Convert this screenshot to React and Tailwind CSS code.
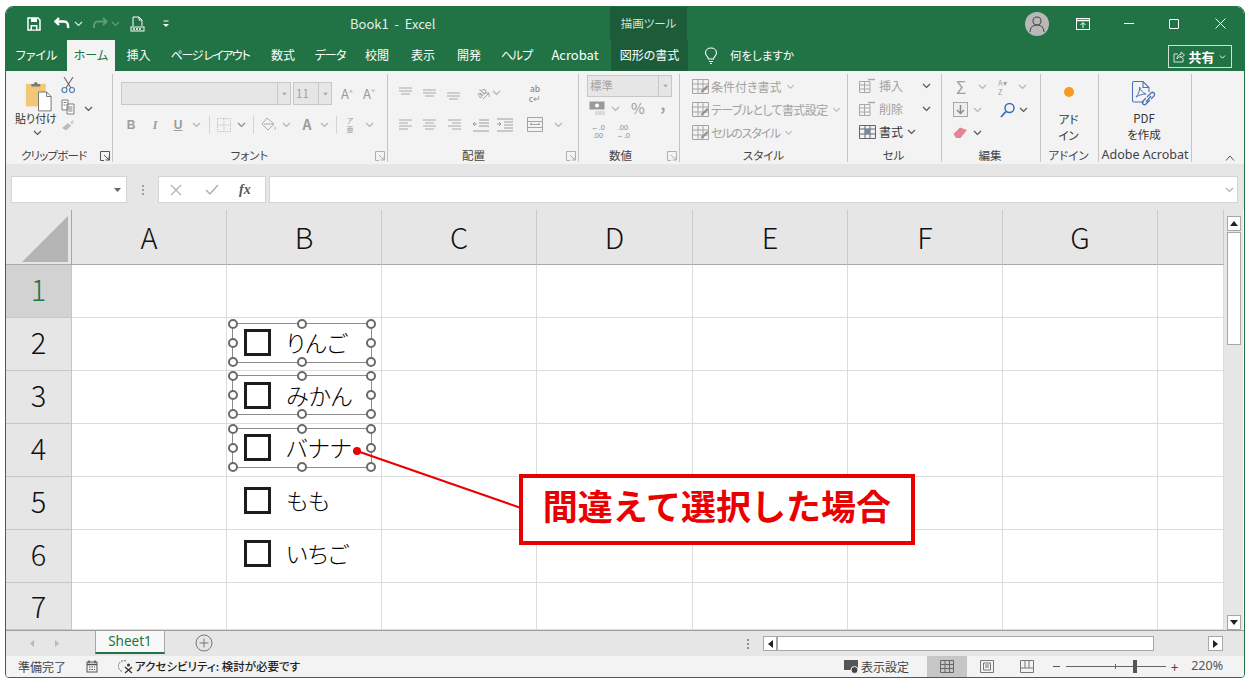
import React from 'react';
import clsx from 'clsx';

const Chev = ({ className, color = '#555' }) => (
  <svg width="9" height="6" viewBox="0 0 9 6" className={clsx('shrink-0', className)}>
    <polyline points="1,1 4.5,4.5 8,1" fill="none" stroke={color} strokeWidth="1.2" />
  </svg>
);

const Caret = ({ className, color = '#555' }) => (
  <svg width="7" height="4" viewBox="0 0 7 4" className={clsx('shrink-0', className)}>
    <polygon points="0,0 7,0 3.5,4" fill={color} />
  </svg>
);

const Launcher = ({ color = '#777' }) => (
  <svg width="10" height="10" viewBox="0 0 10 10" className="absolute right-[2px] bottom-[1px]">
    <path d="M0.5 0.5H9.5V9.5M0.5 0.5V9.5H4M4 4L9 9M9 5.5V9H5.5" fill="none" stroke={color} strokeWidth="1" />
  </svg>
);

const Lines = ({ rows, color = '#a8a8a8' }) => (
  <svg width="16" height="14" viewBox="0 0 16 14">
    {rows.map(([x1, x2, y], i) => (
      <line key={i} x1={x1} x2={x2} y1={y} y2={y} stroke={color} strokeWidth="1" />
    ))}
  </svg>
);

const Group = ({ label, className, launcher, labelClass, children }) => (
  <div className={clsx('relative mt-[3px] mb-[2px] flex shrink-0 flex-col border-r border-[#c4c4c4]', className)}>
    <div className="h-[74px]">{children}</div>
    <div className={clsx('h-[14px] text-center text-[11.5px] leading-[14px] text-[#444]', labelClass)}>{label}</div>
    {launcher && <Launcher color={launcher} />}
  </div>
);

const tabs = [
  ['ファイル', 'w-[61px]'],
  ['ホーム', 'w-[48px] bg-[#f3f3f3] text-[#217346]'],
  ['挿入', 'w-[47px]'],
  ['ページ レイアウト', 'w-[96px] tracking-[-1.3px]'],
  ['数式', 'w-[50px]'],
  ['データ', 'w-[44px] tracking-[-1px]'],
  ['校閲', 'w-[50px]'],
  ['表示', 'w-[42px]'],
  ['開発', 'w-[50px]'],
  ['ヘルプ', 'w-[45px] tracking-[-1px]'],
  ['Acrobat', 'w-[72px] text-[13px]'],
  ['図形の書式', 'w-[77px] bg-[#1d5c39]'],
];

const TitleBar = () => (
  <div className="flex h-[33px] shrink-0 items-center bg-[#217346] text-white">
    <svg width="14" height="14" viewBox="0 0 14 14" className="ml-[21px]">
      <path d="M1 1H11L13 3V13H1Z" fill="none" stroke="#fff" strokeWidth="1.5" />
      <rect x="4" y="1" width="6" height="4" fill="#fff" />
      <rect x="3.5" y="8" width="7" height="5" fill="#fff" />
      <rect x="5" y="9.5" width="4" height="3" fill="#217346" />
    </svg>
    <svg width="16" height="13" viewBox="0 0 16 13" className="ml-[13px]">
      <path d="M5 1L1.5 4.5L5 8M2 4.5H10C13 4.5 14.500 6.500 14 11" fill="none" stroke="#fff" strokeWidth="2.400" />
    </svg>
    <Chev color="#d7e6dd" className="ml-[4px]" />
    <svg width="16" height="13" viewBox="0 0 16 13" className="ml-[9px]">
      <path d="M11 1L14.500 4.500L11 8M14 4.500H6C3 4.500 1.500 6.500 2 11" fill="none" stroke="#5f9a79" strokeWidth="2" />
    </svg>
    <Chev color="#5f9a79" className="ml-[3px]" />
    <svg width="15" height="16" viewBox="0 0 15 16" className="ml-[10px]">
      <path d="M3 10V1H9L12 4V10M9 1V4H12" fill="none" stroke="#fff" strokeWidth="1" />
      <rect x="1" y="11" width="13" height="4" fill="none" stroke="#fff" strokeWidth="1" />
      <path d="M3 13H12" stroke="#fff" strokeWidth="1.500" strokeDasharray="2 1" />
    </svg>
    <svg width="6" height="8" viewBox="0 0 6 8" className="ml-[18px]">
      <path d="M0.500 1H5.500" stroke="#fff" />
      <polygon points="0,4 6,4 3,7" fill="#fff" />
    </svg>
    <div className="ml-[181px] w-[90px] text-[13px] whitespace-pre text-[#e4efe8]">Book1  -  Excel</div>
    <div className="ml-[170px] flex h-[33px] w-[77px] items-center justify-center bg-[#1d5c39] text-[11.5px] text-[#d5e5db]">描画ツール</div>
    <div className="ml-[338px] flex h-[24px] w-[24px] items-center justify-center rounded-full bg-[#b8b8b8]">
      <svg width="18" height="18" viewBox="0 0 18 18">
        <circle cx="9" cy="6" r="4" fill="none" stroke="#4a4a4a" strokeWidth="1.100" />
        <path d="M2 17C2 12.500 5 10 9 10C13 10 16 12.500 16 17" fill="none" stroke="#4a4a4a" strokeWidth="1.100" />
      </svg>
    </div>
    <svg width="14" height="12" viewBox="0 0 14 12" className="ml-[27px]">
      <rect x="0.500" y="0.500" width="13" height="11" fill="none" stroke="#fff" />
      <path d="M0.500 2.500H13.500" stroke="#fff" strokeWidth="1.500" />
      <path d="M7 10V5M4.500 7L7 4.500L9.500 7" fill="none" stroke="#fff" />
    </svg>
    <div className="ml-[34px] h-px w-[10px] bg-white" />
    <div className="ml-[35px] h-[10px] w-[10px] rounded-[1px] border border-white" />
    <svg width="11" height="11" viewBox="0 0 11 11" className="ml-[36px]">
      <path d="M0.500 0.500L10.500 10.500M10.500 0.500L0.500 10.500" stroke="#fff" />
    </svg>
  </div>
);

const TabRow = () => (
  <div className="flex h-[31px] shrink-0 items-stretch bg-[#217346] text-[12px] text-white">
    {tabs.map(([name, cls]) => (
      <div key={name} className={clsx('flex items-center justify-center pb-[1px] whitespace-pre', cls)}>{name}</div>
    ))}
    <div className="ml-[16px] flex items-center">
      <svg width="14" height="18" viewBox="0 0 14 18">
        <path d="M4.500 12C4 9.500 1.500 8.500 1.500 5.800C1.500 3 4 1 7 1C10 1 12.500 3 12.500 5.800C12.500 8.500 10 9.500 9.500 12Z M5 14.500H9M6 16.500H8" fill="none" stroke="#fff" strokeWidth="1.100" />
      </svg>
      <span className="ml-[12px] text-[11.5px]">何をしますか</span>
    </div>
    <div className="ml-auto mr-[12px] mt-[5px] flex h-[23px] w-[64px] items-center justify-center border border-[#cfe0d6] text-[13px] font-bold">
      <svg width="12" height="12" viewBox="0 0 12 12" className="mr-[3px]">
        <path d="M5 3H1V11H10V7M4 8C4 5 6 3.500 8 3.500V1L11.500 4L8 7V5.500C6.500 5.500 5 6.500 4 8Z" fill="none" stroke="#fff" strokeWidth="0.800" />
      </svg>
      共有
      <Chev color="#fff" className="ml-[3px] scale-75" />
    </div>
  </div>
);

const ClipboardGroup = () => (
  <Group label="クリップボード" launcher="#555" className="w-[107px] pl-[9px]" labelClass="whitespace-nowrap pl-[6px] text-left tracking-[-0.8px]">
    <div className="flex">
      <div className="w-[42px]">
        <svg width="27" height="33" viewBox="0 0 30 36" className="ml-[10px] mt-[6px]">
          <rect x="1" y="4" width="22" height="25" fill="#f2c877" />
          <path d="M7 4H10C10 1 14 1 14 4H17V7H7Z" fill="#7a7a7a" />
          <path d="M15 13H24L29 18V34H15Z" fill="#fff" stroke="#6a6a6a" />
          <path d="M24 13V18H29" fill="none" stroke="#6a6a6a" />
        </svg>
        <div className="mt-[-2px] text-[11px] leading-[14px] text-[#333] whitespace-nowrap">貼り付け</div>
        <Chev className="ml-[18px] mt-[5px]" />
      </div>
      <div className="ml-[4px] w-[22px]">
        <svg width="15" height="16" viewBox="0 0 15 16" className="mt-[3px]">
          <path d="M3 0L10 11M12 0L5 11" stroke="#666" strokeWidth="1.100" />
          <circle cx="3.500" cy="13" r="2.500" fill="none" stroke="#4f7fb3" strokeWidth="1.200" />
          <circle cx="11" cy="13" r="2.500" fill="none" stroke="#4f7fb3" strokeWidth="1.200" />
        </svg>
        <svg width="14" height="16" viewBox="0 0 14 16" className="mt-[6px]">
          <path d="M1 1H7V11H1ZM6 5H13V15H6Z" fill="#fff" stroke="#7d7d7d" />
          <path d="M2.500 3.500H5.500M2.500 6H4.500M7.500 8H11.500M7.500 10H11.500M7.500 12H11.500" stroke="#7d7d7d" />
        </svg>
        <svg width="14" height="12" viewBox="0 0 14 12" className="mt-[4px]">
          <path d="M1 9L7 4L10 7L5 11.500Z" fill="#bcbcbc" />
          <path d="M9 3L12 1L13 2.500L11 6Z" fill="#d0d0d0" />
        </svg>
      </div>
      <Chev className="ml-[1px] mt-[32px]" />
    </div>
  </Group>
);

const FontGroup = () => (
  <Group label="フォント" launcher="#b0b0b0" className="w-[275px]" labelClass="pr-[1px]">
    <div className="ml-[8px] mt-[8px] flex h-[23px] items-center">
      <div className="flex h-[23px] w-[170px] items-center justify-end border border-[#c8c8c8] bg-[#e6e6e6]">
        <div className="flex h-full w-[13px] items-center justify-center border-l border-[#c8c8c8]"><Caret color="#a8a8a8" className="scale-75" /></div>
      </div>
      <div className="ml-[2px] flex h-[23px] w-[39px] items-center border border-[#c8c8c8] bg-[#e6e6e6] pl-[2px] text-[11.5px] text-[#a0a0a0]">
        <span className="flex-1">11</span>
        <div className="flex h-full w-[13px] items-center justify-center border-l border-[#c8c8c8]"><Caret color="#a8a8a8" className="scale-75" /></div>
      </div>
      <div className="ml-[9px] w-[14px] text-[13px] text-[#9c9c9c]">A<sup className="text-[7px]">^</sup></div>
      <div className="ml-[8px] w-[14px] text-[13px] text-[#9c9c9c]">A<sup className="text-[7px]">ˇ</sup></div>
    </div>
    <div className="ml-[6px] mt-[8px] flex h-[23px] items-center text-[12px] text-[#9c9c9c]">
      <b className="w-[24px] text-center font-['Liberation_Sans',sans-serif]">B</b>
      <b className="w-[24px] text-center font-['Liberation_Serif',serif] italic">I</b>
      <b className="w-[22px] text-center font-['Liberation_Sans',sans-serif] underline">U</b>
      <Chev color="#b4b4b4" className="ml-[3px]" />
      <div className="ml-[8px] h-[18px] w-px bg-[#d4d4d4]" />
      <svg width="14" height="14" viewBox="0 0 14 14" className="ml-[7px]">
        <path d="M0.500 0.500H13.500V13.500H0.500ZM7 0.500V13.500M0.500 7H13.500" fill="none" stroke="#c6c6c6" strokeDasharray="1.500 1" />
      </svg>
      <Chev color="#888" className="ml-[6px]" />
      <div className="ml-[7px] h-[18px] w-px bg-[#d4d4d4]" />
      <svg width="16" height="15" viewBox="0 0 16 15" className="ml-[7px]">
        <path d="M6 1L1 7L7 13L13 7ZM3 7H13" fill="none" stroke="#acacac" />
        <path d="M14 9C15 11 15.500 12 14.500 13C13.500 13 13 11 14 9Z" fill="#c0c0c0" />
      </svg>
      <Chev color="#b4b4b4" className="ml-[5px]" />
      <span className="ml-[10px] w-[12px] text-center text-[14px] font-bold">A</span>
      <Chev color="#b4b4b4" className="ml-[7px]" />
      <div className="ml-[7px] h-[18px] w-px bg-[#d4d4d4]" />
      <div className="ml-[7px] flex w-[12px] flex-col items-center text-[7px] leading-[9px]">
        <span>ア</span>
        <span>亜</span>
      </div>
      <Chev color="#b4b4b4" className="ml-[9px]" />
    </div>
  </Group>
);

const AlignGroup = () => (
  <Group label="配置" launcher="#b0b0b0" className="w-[191px]" labelClass="pr-[19px]">
    <div className="ml-[10px] mt-[7px] flex h-[23px] items-center">
      <div className="w-[24px]"><Lines rows={[[1, 14, 2], [1, 14, 5], [3, 12, 8]]} /></div>
      <div className="w-[24px]"><Lines rows={[[1, 14, 4], [1, 14, 7], [3, 12, 10]]} /></div>
      <div className="w-[26px]"><Lines rows={[[1, 14, 7], [1, 14, 10], [3, 12, 13]]} /></div>
      <div className="relative flex h-[14px] w-[18px] items-center justify-center">
        <span className="-rotate-45 text-[9px] leading-none text-[#9a9a9a]">ab</span>
        <svg width="8" height="8" viewBox="0 0 8 8" className="absolute right-0 bottom-0">
          <path d="M1 7L7 1M3 1H7V5" fill="none" stroke="#a8a8a8" />
        </svg>
      </div>
      <Chev color="#b4b4b4" className="ml-[2px]" />
      <div className="ml-[19px] flex w-[30px] flex-col items-center text-[8.5px] font-medium leading-[10px] text-[#8e8e8e]">
        <span>ab</span>
        <span>c↵</span>
      </div>
    </div>
    <div className="ml-[10px] mt-[9px] flex h-[23px] items-center">
      <div className="w-[24px]"><Lines rows={[[1, 14, 2], [1, 10, 5], [1, 14, 8], [1, 10, 11]]} /></div>
      <div className="w-[25px]"><Lines rows={[[1, 14, 2], [3, 12, 5], [1, 14, 8], [3, 12, 11]]} /></div>
      <div className="w-[25px]"><Lines rows={[[1, 14, 2], [5, 14, 5], [1, 14, 8], [5, 14, 11]]} /></div>
      <svg width="18" height="14" viewBox="0 0 18 14" className="mr-[6px]">
        <path d="M7 2H17M7 5H17M7 8H17M1 13H17M5 6H1M3 4L1 6L3 8" fill="none" stroke="#9c9c9c" />
      </svg>
      <svg width="18" height="14" viewBox="0 0 18 14">
        <path d="M1 1H17M8 4H17M8 7H17M8 10H17M1 13H17M1 6H5M3 4L5 6L3 8" fill="none" stroke="#9c9c9c" />
      </svg>
      <svg width="16" height="15" viewBox="0 0 16 15" className="ml-[13px]">
        <path d="M0.500 0.500H15.500V14.500H0.500ZM0.500 4.500H15.500M0.500 10.500H15.500M3 7.500H13M3 7.500L5 6M13 7.500L11 6" fill="none" stroke="#a4a4a4" />
      </svg>
      <Chev color="#b4b4b4" className="ml-[11px]" />
    </div>
  </Group>
);

const NumberGroup = () => (
  <Group label="数値" launcher="#b0b0b0" className="w-[101px]" labelClass="pr-[17px]">
    <div className="ml-[8px] mt-[1px] flex h-[22px] w-[85px] items-center border border-[#c8c8c8] bg-[#e6e6e6] pl-[2px] text-[11.500px] text-[#a4a4a4]">
      <span className="flex-1">標準</span>
      <div className="flex h-full w-[13px] items-center justify-center border-l border-[#c8c8c8]"><Caret color="#a8a8a8" className="scale-75" /></div>
    </div>
    <div className="ml-[10px] flex h-[23px] items-center text-[#9c9c9c]">
      <svg width="17" height="15" viewBox="0 0 17 15">
        <rect x="0.500" y="0.500" width="15" height="8" fill="#9a9a9a" />
        <circle cx="8" cy="4.500" r="2" fill="#fff" />
        <path d="M6 11H16M6 13H16" stroke="#c4c4c4" />
      </svg>
      <Chev color="#b4b4b4" className="ml-[5px]" />
      <span className="ml-[6px] w-[24px] text-center text-[15px]">%</span>
      <span className="mb-[9px] ml-[6px] w-[14px] text-center text-[15px] font-bold leading-[12px]">,</span>
    </div>
    <div className="ml-[9px] flex h-[23px] items-center font-['Liberation_Sans',sans-serif] text-[7.500px] leading-[8px] text-[#8e8e8e]">
      <div className="flex w-[20px] flex-col items-center"><span>←.0</span><span>.00</span></div>
      <div className="ml-[4px] flex w-[22px] flex-col items-center"><span>.00</span><span>→.0</span></div>
    </div>
  </Group>
);

const StyleRow = ({ label, icon, labelClass }) => (
  <div className="ml-[12px] flex h-[23px] items-center text-[12px] text-[#a2a2a2] whitespace-nowrap">
    {icon}
    <span className={clsx('ml-[2px]', labelClass)}>{label}</span>
    <Chev color="#b4b4b4" className="ml-[4px] scale-90" />
  </div>
);

const grid16 = (
  <svg width="17" height="15" viewBox="0 0 17 15">
    <path d="M0.500 0.500H16.500V14.500H0.500ZM0.500 5H16.500M0.500 10H16.500M6 0.500V14.500M11 0.500V14.500" fill="none" stroke="#a4a4a4" />
    <path d="M9 12L15 6L16.500 7.500L11 13L8.500 13.500Z" fill="#8f8f8f" />
  </svg>
);

const StyleGroup = () => (
  <Group label="スタイル" className="w-[168px]">
    <div className="pt-[1px]">
      <StyleRow label="条件付き書式" icon={grid16} />
      <StyleRow label="テーブルとして書式設定" icon={grid16} labelClass="tracking-[-0.6px]" />
      <StyleRow label="セルのスタイル" icon={grid16} labelClass="tracking-[-1.2px]" />
    </div>
  </Group>
);

const CellsGroup = () => (
  <Group label="セル" className="w-[94px]" labelClass="pr-[2px]">
    <div className="text-[12px]">
      {['挿入', '削除'].map((t) => (
        <div key={t} className="ml-[11px] flex h-[23px] items-center text-[#a2a2a2]">
          <svg width="17" height="15" viewBox="0 0 17 15">
            <path d="M0.500 3.500H11V14.500H0.500ZM0.500 7H11M0.500 11H11M5.500 3.500V14.500" fill="none" stroke="#a8a8a8" />
            <path d="M9 1.500H16" stroke="#a8a8a8" strokeWidth="1.500" />
          </svg>
          <span className="ml-[3px] w-[24px]">{t}</span>
          <Chev className="ml-[19px]" />
        </div>
      ))}
      <div className="ml-[11px] flex h-[23px] items-center text-[#333]">
        <svg width="17" height="15" viewBox="0 0 17 15">
          <path d="M0.500 1.500H16.500V14.500H0.500ZM0.500 5H16.500M0.500 10H16.500M6 1.500V14.500M11 1.500V14.500" fill="none" stroke="#666" />
          <rect x="6" y="5" width="5" height="5" fill="#5b8cc4" />
        </svg>
        <span className="ml-[3px] w-[24px]">書式</span>
        <Chev className="ml-[4px]" />
      </div>
    </div>
  </Group>
);

const EditGroup = () => (
  <Group label="編集" className="w-[99px]" labelClass="pr-[2px]">
    <div className="ml-[12px] mt-[1px] flex h-[23px] items-center">
      <span className="w-[14px] text-center text-[17px] leading-[17px] text-[#a0a0a0]">Σ</span>
      <Chev color="#b4b4b4" className="ml-[10px]" />
      <div className="ml-[11px] flex w-[17px] flex-col text-[7.5px] leading-[9px] text-[#a0a0a0]">
        <span>A▾</span>
        <span>Z</span>
      </div>
      <Chev color="#b4b4b4" className="ml-[3px]" />
    </div>
    <div className="ml-[11px] flex h-[23px] items-center">
      <svg width="15" height="15" viewBox="0 0 15 15">
        <rect x="0.500" y="0.500" width="14" height="14" fill="#eee" stroke="#a8a8a8" />
        <path d="M7.500 3V11M4 8L7.500 11.500L11 8" fill="none" stroke="#8a8a8a" strokeWidth="1.500" />
      </svg>
      <Chev color="#b4b4b4" className="ml-[5px]" />
      <svg width="16" height="16" viewBox="0 0 16 16" className="ml-[18px]">
        <circle cx="9.500" cy="6" r="4.500" fill="none" stroke="#2f70b8" strokeWidth="1.500" />
        <path d="M6 9.500L1 15" stroke="#2f70b8" strokeWidth="1.800" />
      </svg>
      <Chev className="ml-[3px]" />
    </div>
    <div className="ml-[11px] flex h-[23px] items-center">
      <svg width="15" height="12" viewBox="0 0 15 12">
        <path d="M0.500 7L7 0.500L14 3L7.500 11L3 11Z" fill="#e58397" />
      </svg>
      <Chev className="ml-[5px]" />
    </div>
  </Group>
);

const AddinGroup = () => (
  <Group label="アドイン" className="w-[58px]" labelClass="pr-[2px]">
    <div className="flex flex-col items-center pr-[2px] text-[11.500px] leading-[16px] text-[#333]">
      <div className="mt-[13px] h-[10px] w-[10px] rounded-full bg-[#f79a1e]" />
      <div className="mt-[14px]">アド</div>
      <div>イン</div>
    </div>
  </Group>
);

const AcrobatGroup = () => (
  <Group label="Adobe Acrobat" className="w-[93px]" labelClass="whitespace-nowrap font-['Noto_Sans',sans-serif] text-[12.5px]">
    <div className="flex flex-col items-center pr-[2px] text-[11.500px] leading-[16px] text-[#333]">
      <svg width="26" height="28" viewBox="0 0 26 28" className="mt-[6px]">
        <path d="M13 22H3C2 22 1.500 21.500 1.500 20.500V3C1.500 2 2 1.500 3 1.500H12L18 7.500V12M12 1.500V7.500H18" fill="none" stroke="#4a74b8" strokeWidth="1.100" />
        <path d="M5 17C8 14 9 9 8.500 7C10 11 12 13 15 14C12 14 8 15 5 17Z" fill="none" stroke="#4a74b8" />
        <path d="M16 17L20 13C22 11 25 14 23 16L20 19M19 20L15 24C13 26 10 23 12 21L15 18M15 22L20 16" fill="none" stroke="#4a74b8" strokeWidth="1.200" />
      </svg>
      <div className="mt-[2px]">PDF</div>
      <div>を作成</div>
    </div>
  </Group>
);

const Ribbon = () => (
  <div className="relative flex h-[93px] shrink-0 bg-[#f3f3f3]">
    <ClipboardGroup />
    <FontGroup />
    <AlignGroup />
    <NumberGroup />
    <StyleGroup />
    <CellsGroup />
    <EditGroup />
    <AddinGroup />
    <AcrobatGroup />
    <div className="flex flex-1 items-end justify-end pb-[3px] pr-[9px]">
      <svg width="10" height="6" viewBox="0 0 10 6"><polyline points="1,5.500 5,1 9,5.500" fill="none" stroke="#555" /></svg>
    </div>
  </div>
);

const FormulaBar = () => (
  <div className="flex h-[46px] shrink-0 bg-[#e6e6e6] pt-[12px]">
    <div className="ml-[5px] flex h-[27px] w-[116px] items-center justify-end border border-[#d4d4d4] bg-white pr-[5px]">
      <Caret color="#666" />
    </div>
    <div className="ml-[15px] mt-[9px] flex h-[10px] flex-col gap-[2px]">
      <div className="h-[2px] w-[2px] bg-[#a0a0a0]" />
      <div className="h-[2px] w-[2px] bg-[#a0a0a0]" />
      <div className="h-[2px] w-[2px] bg-[#a0a0a0]" />
    </div>
    <div className="ml-[14px] flex h-[27px] w-[108px] items-center border border-[#d4d4d4] bg-white">
      <svg width="12" height="12" viewBox="0 0 12 12" className="ml-[11px]"><path d="M1 1L11 11M11 1L1 11" stroke="#b0b0b0" strokeWidth="1.200" /></svg>
      <svg width="14" height="12" viewBox="0 0 14 12" className="ml-[23px]"><path d="M1 6L5 10L13 1" fill="none" stroke="#b0b0b0" strokeWidth="1.500" /></svg>
      <span className="ml-[20px] font-['Liberation_Serif',serif] text-[14px] font-bold italic text-[#555]">fx</span>
    </div>
    <div className="ml-[3px] flex h-[27px] w-[969px] items-center justify-end border border-[#d4d4d4] bg-white pr-[3px]">
      <Chev color="#b0b0b0" />
    </div>
  </div>
);

const handleSpots = [
  'left-[-5px] top-[-5px]', 'left-[64px] top-[-5px]', 'right-[-5px] top-[-5px]',
  'left-[-5px] top-[14px]', 'right-[-5px] top-[14px]',
  'left-[-5px] bottom-[-5px]', 'left-[64px] bottom-[-5px]', 'right-[-5px] bottom-[-5px]',
];

const Frame = ({ className }) => (
  <div className={clsx('absolute left-[5px] h-[40px] w-[140px] border border-[#8c8c8c]', className)}>
    {handleSpots.map((s) => (
      <div key={s} className={clsx('absolute h-[10px] w-[10px] rounded-full border-2 border-[#6a6a6a] bg-white', s)} />
    ))}
  </div>
);

const CheckItem = ({ label, frame, className }) => (
  <div className={clsx('flex items-start pl-[17px]', className)}>
    {frame && <Frame className={frame} />}
    <div className="relative h-[27px] w-[27px] shrink-0 border-[3px] border-[#1c1c1c] bg-white" />
    <span className="relative ml-[15px] whitespace-nowrap text-[23px] font-light leading-[27px] text-black">{label}</span>
  </div>
);

const columns = ['A', 'B', 'C', 'D', 'E', 'F', 'G', ''];
const rows = [1, 2, 3, 4, 5, 6, 7];
const items = {
  2: { label: 'りんご', frame: 'top-[5px]', className: 'pt-[11px]' },
  3: { label: 'みかん', frame: 'top-[4px]', className: 'pt-[11px]' },
  4: { label: 'バナナ', frame: 'top-[4px]', className: 'pt-[10px]' },
  5: { label: 'もも', className: 'pt-[10px]' },
  6: { label: 'いちご', className: 'pt-[10px]' },
};

const Sheet = () => (
  <div className="relative grid h-[420px] w-[1218px] shrink-0 grid-cols-[66px_155px_155px_155px_156px_155px_155px_155px_66px] grid-rows-[55px_53px_53px_53px_53px_53px_53px_47px] overflow-hidden bg-white">
    <div className="flex items-end justify-end border-r border-b border-[#a8a8a8] bg-[#e6e6e6] pr-[3px] pb-[2px]">
      <svg width="46" height="46" viewBox="0 0 46 46"><polygon points="46,0 46,46 0,46" fill="#b4b4b4" /></svg>
    </div>
    {columns.map((c) => (
      <div key={c} className="flex items-center justify-center border-r border-b border-r-[#cacaca] border-b-[#a8a8a8] bg-[#e6e6e6] pb-[1px] text-[29px] font-light text-[#111]">
        <span>{c}</span>
      </div>
    ))}
    {rows.map((r) => (
      <React.Fragment key={r}>
        <div className={clsx('flex items-center justify-center border-r border-b border-[#c6c6c6] text-[29px] font-light', r === 1 ? 'bg-[#d2d2d2] text-[#217346]' : 'bg-[#e6e6e6] text-[#111]', r < 7 && 'pb-[4px]')}>{r}</div>
        {columns.map((c) => (
          <div key={c} className="relative border-r border-b border-[#dcdcdc]">
            {c === 'B' && items[r] && <CheckItem {...items[r]} />}
          </div>
        ))}
      </React.Fragment>
    ))}
    <svg width="1218" height="420" className="pointer-events-none absolute inset-0">
      <line x1="351" y1="241" x2="515" y2="298" stroke="#ea0000" strokeWidth="2" />
      <circle cx="351" cy="241" r="4" fill="#ea0000" />
    </svg>
    <div className="absolute left-[513px] top-[264px] flex h-[71px] w-[396px] items-center justify-center border-[4px] border-[#ea0000] bg-white pb-[8px] text-[35px] font-bold text-[#ea0000] [font-feature-settings:normal]">
      間違えて選択した場合
    </div>
  </div>
);

const VScroll = () => (
  <div className="flex w-[19px] flex-col bg-[#e6e6e6] pl-[3px] pt-[6px]">
    <div className="flex h-[15px] w-[14px] items-center justify-center border border-[#a8a8a8] bg-white">
      <svg width="8" height="5" viewBox="0 0 8 5"><polygon points="0,5 8,5 4,0" fill="#222" /></svg>
    </div>
    <div className="mt-[1px] h-[113px] w-[14px] border border-[#a8a8a8] bg-white" />
    <div className="mt-auto flex h-[15px] w-[14px] items-center justify-center border border-[#a8a8a8] bg-white">
      <svg width="8" height="5" viewBox="0 0 8 5"><polygon points="0,0 8,0 4,5" fill="#222" /></svg>
    </div>
  </div>
);

const SheetTabs = () => (
  <div className="flex h-[26px] shrink-0 items-start border-t border-[#9e9e9e] bg-[#e6e6e6]">
    <svg width="4" height="7" viewBox="0 0 4 7" className="ml-[24px] mt-[9px]"><polygon points="4,0 4,7 0,3.500" fill="#b8b8b8" /></svg>
    <svg width="4" height="7" viewBox="0 0 4 7" className="ml-[21px] mt-[9px]"><polygon points="0,0 0,7 4,3.500" fill="#b8b8b8" /></svg>
    <div className="ml-[36px] flex h-[23px] w-[70px] items-center justify-center border-x border-b-2 border-x-[#a8a8a8] border-b-[#217346] bg-[#f8f8f8] font-['Noto_Sans',sans-serif] text-[13.500px] text-[#217346]">Sheet1</div>
    <svg width="18" height="18" viewBox="0 0 18 18" className="ml-[30px] mt-[3px]">
      <circle cx="9" cy="9" r="8" fill="none" stroke="#777" />
      <path d="M9 4.500V13.500M4.500 9H13.500" stroke="#777" />
    </svg>
    <div className="ml-[534px] mt-[8px] flex flex-col gap-[2px]">
      <div className="h-[2px] w-[2px] bg-[#8e8e8e]" />
      <div className="h-[2px] w-[2px] bg-[#8e8e8e]" />
      <div className="h-[2px] w-[2px] bg-[#8e8e8e]" />
    </div>
    <div className="ml-[14px] mt-[5px] flex h-[15px] w-[14px] items-center justify-center border border-[#a8a8a8] bg-white">
      <svg width="5" height="8" viewBox="0 0 5 8"><polygon points="5,0 5,8 0,4" fill="#222" /></svg>
    </div>
    <div className="mt-[5px] h-[15px] w-[377px] border border-[#a8a8a8] bg-white" />
    <div className="ml-[54px] mt-[5px] flex h-[15px] w-[15px] items-center justify-center border border-[#a8a8a8] bg-white">
      <svg width="5" height="8" viewBox="0 0 5 8"><polygon points="0,0 0,8 5,4" fill="#222" /></svg>
    </div>
  </div>
);

const StatusBar = () => (
  <div className="flex h-[21px] shrink-0 items-center bg-[#f3f3f3] text-[12px] text-[#444]">
    <span className="ml-[12px] w-[48px] whitespace-nowrap">準備完了</span>
    <svg width="12" height="13" viewBox="0 0 12 13" className="ml-[20px]">
      <rect x="1" y="2" width="10" height="10" fill="none" stroke="#555" />
      <path d="M3 0.500V3M9 0.500V3M1 4.500H11" stroke="#555" strokeWidth="1.500" />
      <path d="M3 7H9M3 9.500H9" stroke="#555" strokeDasharray="1.500 1" />
    </svg>
    <svg width="16" height="14" viewBox="0 0 16 14" className="ml-[20px]">
      <path d="M8 1A5.500 5.500 0 1 0 4 11.500" fill="none" stroke="#666" strokeDasharray="2 1" />
      <path d="M7 7L14 13M14 7L7 13" stroke="#333" strokeWidth="1.300" />
      <circle cx="10.500" cy="5" r="1.500" fill="#333" />
    </svg>
    <span className="ml-[1px] w-[164px] whitespace-nowrap text-[11.5px] font-medium text-[#222]">アクセシビリティ: 検討が必要です</span>
    <svg width="15" height="14" viewBox="0 0 15 14" className="ml-[545px]">
      <rect x="0" y="0" width="14" height="10" fill="#555" />
      <circle cx="10.500" cy="10" r="3.500" fill="#444" stroke="#f3f3f3" />
    </svg>
    <span className="ml-[2px] w-[48px] whitespace-nowrap">表示設定</span>
    <div className="ml-[18px] flex h-[21px] w-[40px] items-center justify-center bg-[#c6c6c6]">
      <svg width="14" height="13" viewBox="0 0 14 13"><path d="M0.500 0.500H13.500V12.500H0.500ZM0.500 4.500H13.500M0.500 8.500H13.500M5 0.500V12.500M9.500 0.500V12.500" fill="none" stroke="#666" /></svg>
    </div>
    <div className="flex h-[21px] w-[40px] items-center justify-center">
      <svg width="14" height="13" viewBox="0 0 14 13"><path d="M0.500 0.500H13.500V12.500H0.500ZM3.500 3H10.500V10H3.500ZM5 5H9M5 7H9" fill="none" stroke="#777" /></svg>
    </div>
    <div className="flex h-[21px] w-[40px] items-center justify-center">
      <svg width="14" height="13" viewBox="0 0 14 13"><path d="M0.500 0.500H13.500V12.500H0.500ZM0.500 8H13.500M5 0.500V8M9 0.500V8" fill="none" stroke="#777" /></svg>
    </div>
    <div className="ml-[6px] h-px w-[7px] bg-[#555]" />
    <div className="relative ml-[6px] flex h-[13px] w-[100px] items-center justify-center">
      <div className="h-px w-full bg-[#666]" />
      <div className="absolute left-[49px] h-[5px] w-px bg-[#666]" />
      <div className="absolute left-[67px] h-[13px] w-[4px] bg-[#555]" />
    </div>
    <span className="ml-[5px] text-[13px] leading-none">+</span>
    <span className="ml-[13px] font-['Noto_Sans',sans-serif] text-[12.500px] text-[#555]">220%</span>
  </div>
);

export default function App() {
  return (
    <div className="h-[684px] w-[1251px] overflow-hidden bg-white pl-[5px] pt-[6px] font-['Noto_Sans_CJK_JP','Noto_Sans',sans-serif] [font-feature-settings:'palt']">
      <div className="flex h-[672px] w-[1240px] flex-col overflow-hidden rounded-t-[8px] rounded-b-[4px] border border-[#217346]">
        <TitleBar />
        <TabRow />
        <Ribbon />
        <FormulaBar />
        <div className="flex shrink-0">
          <Sheet />
          <VScroll />
        </div>
        <SheetTabs />
        <StatusBar />
      </div>
    </div>
  );
}
